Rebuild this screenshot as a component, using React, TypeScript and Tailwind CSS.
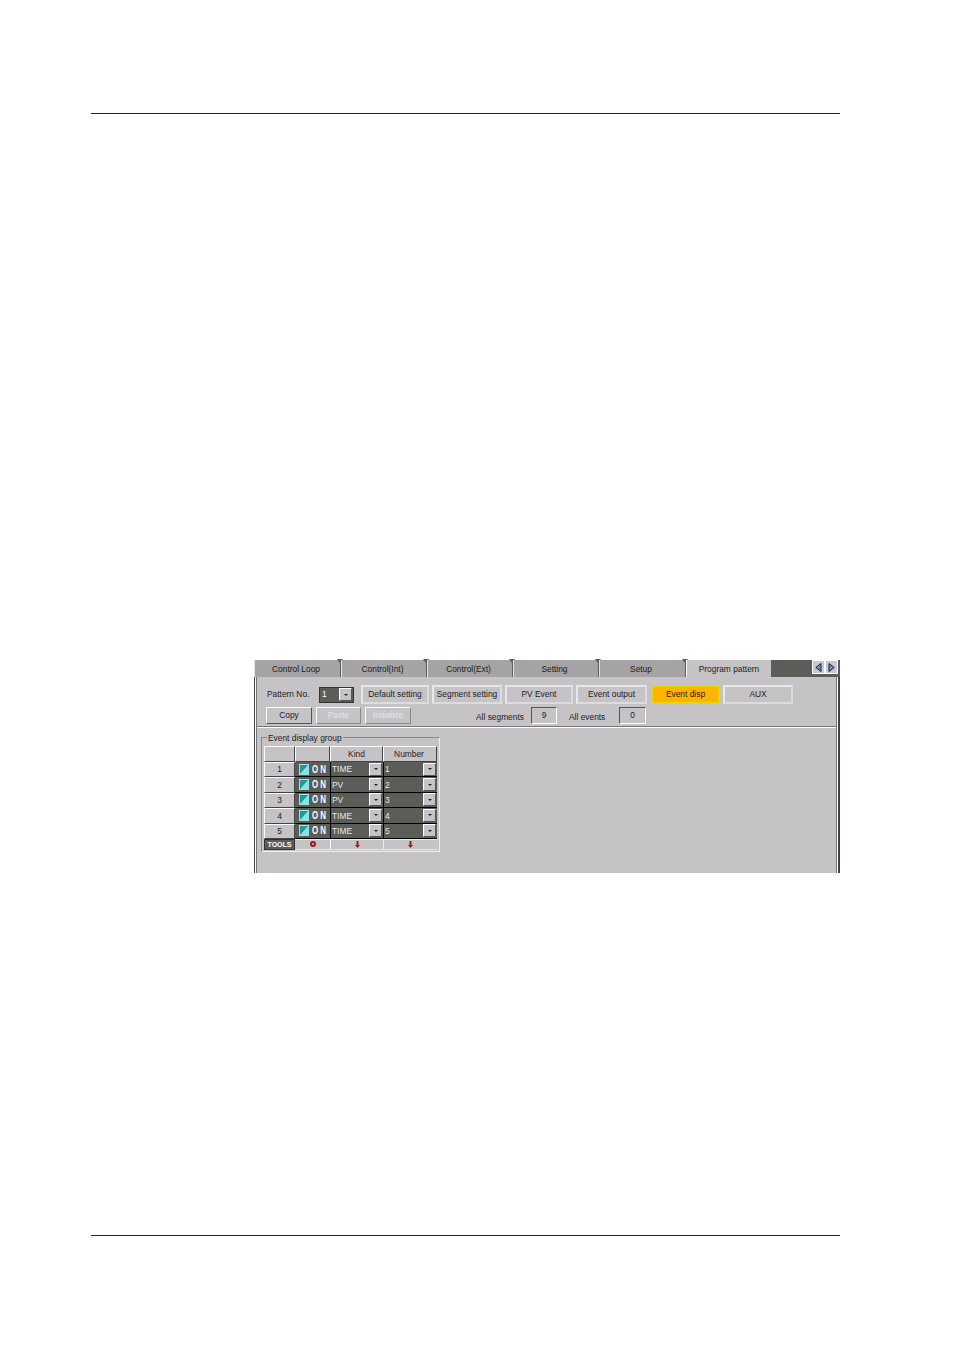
const tabs = [
  { label: 'Control Loop', w: 'w-[87px]' },
  { label: 'Control(Int)', w: 'w-[86px]' },
  { label: 'Control(Ext)', w: 'w-[86px]' },
  { label: 'Setting', w: 'w-[86px]' },
  { label: 'Setup', w: 'w-[87px]' },
];

const rows = [
  { no: 1, kind: 'TIME' },
  { no: 2, kind: 'PV' },
  { no: 3, kind: 'PV' },
  { no: 4, kind: 'TIME' },
  { no: 5, kind: 'TIME' },
];

function Tab({ label, w }: { label: string; w: string }) {
  return (
    <div className={`relative flex h-[17px] items-center justify-center border-r border-r-[#5a5d58] border-l border-l-[#e4e4e4] bg-[#a5a3a5] pt-[2px] pr-[3px] ${w}`}>
      {label}
      <span className="absolute -top-px -right-[3px] h-0 w-0 border-x-[3px] border-t-[4px] border-x-transparent border-t-[#5a5d58]" />
    </div>
  );
}

function Btn({ label, w, disabled }: { label: string; w: string; disabled?: boolean }) {
  return (
    <div
      className={`flex h-[17px] items-center justify-center border border-t-white border-l-white ${w} ${
        disabled ? 'border-r-[#888] border-b-[#888] text-[#e8e6e8]' : 'border-r-[#555] border-b-[#555]'
      }`}
    >
      {label}
    </div>
  );
}

function ModeBtn({ label, w, active }: { label: string; w: string; active?: boolean }) {
  return (
    <div
      className={`flex h-[19px] items-center justify-center border-2 ${w} ${
        active ? 'border-[#e8d800] bg-[#ffb400]' : 'border-t-[#e8e8e8] border-l-[#e8e8e8] border-r-[#dcdcdc] border-b-[#dcdcdc]'
      }`}
    >
      {label}
    </div>
  );
}

function ValueBox({ value, w }: { value: string; w: string }) {
  return (
    <div className={`flex h-[17px] items-center justify-center border border-t-[#555] border-l-[#555] border-r-white border-b-white ${w}`}>
      {value}
    </div>
  );
}

function DropBtn() {
  return (
    <div className="flex h-[13px] w-[13px] items-center justify-center border border-t-white border-l-white border-r-[#555] border-b-[#555] bg-[#c6c3c6]">
      <span className="h-0 w-0 border-x-[2px] border-t-[2px] border-x-transparent border-t-[#222]" />
    </div>
  );
}

function ComboCell({ value, w }: { value: string; w: string }) {
  return (
    <div className={`flex h-full items-center justify-between border-b border-b-black border-l border-l-black bg-[#5a5d58] pr-px pl-px text-[#e8e8e8] ${w}`}>
      <span className="pt-px">{value}</span>
      <DropBtn />
    </div>
  );
}

function ArrowDown() {
  return (
    <svg width="5" height="7" viewBox="0 0 5 7">
      <path d="M1.5 0h2v4H5L2.5 7 0 4h1.5z" fill="#a01818" />
    </svg>
  );
}

export default function App() {
  return (
    <div className="flex h-[1350px] w-[954px] flex-col bg-white pt-[113px] font-['Liberation_Sans',sans-serif] text-[8.4px] text-[#1c1c1c]">
      <div className="ml-[91px] h-px w-[749px] bg-[#222]" />

      <div className="mt-[546px] ml-[254px] flex h-[213px] w-[586px] flex-col bg-[#c6c3c6]">
        {/* tabs */}
        <div className="flex h-[17px] bg-white">
          {tabs.map((t) => (
            <Tab key={t.label} label={t.label} w={t.w} />
          ))}
          <div className="relative flex h-[17px] w-[85px] items-center justify-center border-l border-l-white bg-[#c6c3c6] pt-[2px]">Program pattern</div>
          <div className="h-[17px] w-[41px] bg-[#5a5d58]" />
          <div className="flex h-[17px] w-[28px] bg-[#5a5d58]">
            <div className="flex h-[14px] w-[13px] items-center justify-center border border-white bg-[#c8c8d0]">
              <svg width="7" height="9" viewBox="0 0 7 9">
                <path d="M6 .5v8L.8 4.5z" fill="#7a8cc8" stroke="#222" />
              </svg>
            </div>
            <div className="flex h-[14px] w-[13px] items-center justify-center border border-white bg-[#c8c8d0]">
              <svg width="7" height="9" viewBox="0 0 7 9">
                <path d="M1 .5v8l5.2-4z" fill="#7a8cc8" stroke="#222" />
              </svg>
            </div>
          </div>
        </div>

        {/* body, with the double window edge */}
        <div className="flex flex-1 border-r-2 border-l border-x-[#444]">
          <div className="flex flex-1 border-x border-x-white">
            <div className="flex flex-1 flex-col border-x border-x-[#777]">
              <div className="flex h-[49px] flex-col pt-[8px]">
                <div className="flex items-center">
                  <span className="ml-[10px] w-[52px]">Pattern No.</span>
                  <div className="flex h-[16px] w-[35px] items-center justify-between border border-[#333] bg-[#5a5d58] pr-px pl-[2px] text-white">
                    <span>1</span>
                    <DropBtn />
                  </div>
                  <div className="ml-[7px] flex gap-[3px]">
                    <ModeBtn label="Default setting" w="w-[68px]" />
                    <ModeBtn label="Segment setting" w="w-[70px]" />
                    <ModeBtn label="PV Event" w="w-[68px]" />
                    <ModeBtn label="Event output" w="w-[71px]" />
                    <ModeBtn label="Event disp" w="ml-px w-[69px]" active />
                    <ModeBtn label="AUX" w="w-[70px]" />
                  </div>
                </div>
                <div className="mt-[3px] flex items-center">
                  <div className="ml-[9px] flex gap-[4px]">
                    <Btn label="Copy" w="w-[46px]" />
                    <Btn label="Paste" w="w-[45px]" disabled />
                    <Btn label="Initialize" w="w-[46px]" disabled />
                  </div>
                  <span className="ml-[65px] w-[55px] pt-[3px]">All segments</span>
                  <ValueBox value="9" w="w-[26px]" />
                  <span className="ml-[12px] w-[50px] pt-[3px]">All events</span>
                  <ValueBox value="0" w="w-[27px]" />
                </div>
              </div>
              <div className="h-px bg-[#777]" />
              <div className="h-px bg-white" />

              {/* event display group */}
              <div className="relative mt-[9px] ml-[4px] h-[115px] w-[179px] border border-t-[#888] border-l-[#888] border-r-[#eee] border-b-[#eee] pt-[8px] pl-[2px]">
                <span className="absolute -top-[6px] left-[5px] bg-[#c6c3c6] px-px">Event display group</span>
                <div className="flex w-[173px] flex-col">
                  <div className="flex h-[16px]">
                    <div className="h-full w-[31px] border border-t-white border-l-white border-r-[#444] border-b-[#444]" />
                    <div className="h-full w-[35px] border border-t-white border-l-white border-r-[#444] border-b-[#444]" />
                    <div className="flex h-full w-[53px] items-center justify-center border border-t-white border-l-white border-r-[#444] border-b-[#444]">Kind</div>
                    <div className="flex h-full w-[54px] items-center justify-center border border-t-white border-l-white border-r-[#444] border-b-[#444] pr-[2px]">Number</div>
                  </div>
                  {rows.map((r) => (
                    <div key={r.no} className="flex h-[15.4px]">
                      <div className="flex h-full w-[31px] items-center justify-center border border-t-white border-l-white border-r-[#444] border-b-[#444]">{r.no}</div>
                      <div className="flex h-full w-[35px] items-center gap-[3px] border-b border-b-black bg-[#5a5d58] pl-[4px]">
                        <svg width="10" height="11" viewBox="0 0 10 11" className="shrink-0">
                          <rect width="10" height="11" fill="#1c9aa0" />
                          <path d="M0 11 10 0v11z" fill="#8fe0e0" />
                          <path d="M0 0h10M0 0v11" stroke="#eee" strokeWidth="1.4" />
                        </svg>
                        <span className="w-[15px] origin-left scale-x-[0.72] text-[11px] leading-none font-bold tracking-[3px] text-white">ON</span>
                      </div>
                      <ComboCell value={r.kind} w="w-[53px]" />
                      <ComboCell value={String(r.no)} w="w-[54px]" />
                    </div>
                  ))}
                  <div className="flex h-[11px]">
                    <div className="flex h-full w-[31px] items-center justify-center border border-[#333] bg-[#5a5d58] text-[7px] leading-none font-bold text-white">TOOLS</div>
                    <div className="flex h-full w-[35px] items-center justify-center border-y border-y-[#e8e8e8]">
                      <span className="h-[6px] w-[6px] rounded-full border-2 border-[#a01818]" />
                    </div>
                    <div className="flex h-full w-[53px] items-center justify-center border-y border-y-[#e8e8e8] border-l border-l-white">
                      <ArrowDown />
                    </div>
                    <div className="flex h-full w-[54px] items-center justify-center border-y border-y-[#e8e8e8] border-l border-l-[#e8e8e8]">
                      <ArrowDown />
                    </div>
                  </div>
                </div>
              </div>
            </div>
          </div>
        </div>
      </div>

      <div className="mt-[362px] ml-[91px] h-px w-[749px] bg-[#222]" />
    </div>
  );
}
